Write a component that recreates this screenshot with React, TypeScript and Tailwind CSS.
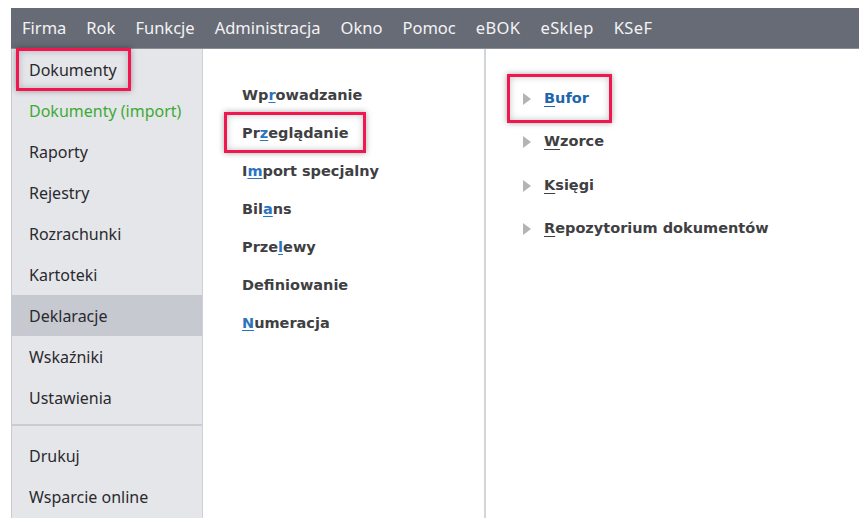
import React from 'react';

type Hotkey = { pre: string; key: string; post: string };

const menuBar = ['Firma', 'Rok', 'Funkcje', 'Administracja', 'Okno', 'Pomoc', 'eBOK', 'eSklep', 'KSeF'];

const modules = [
  'Dokumenty',
  'Dokumenty (import)',
  'Raporty',
  'Rejestry',
  'Rozrachunki',
  'Kartoteki',
  'Deklaracje',
  'Wskaźniki',
  'Ustawienia',
];

const actions: Hotkey[] = [
  { pre: 'Wp', key: 'r', post: 'owadzanie' },
  { pre: 'Pr', key: 'z', post: 'eglądanie' },
  { pre: 'I', key: 'm', post: 'port specjalny' },
  { pre: 'Bil', key: 'a', post: 'ns' },
  { pre: 'Prze', key: 'l', post: 'ewy' },
  { pre: 'Def', key: 'i', post: 'niowanie' },
  { pre: '', key: 'N', post: 'umeracja' },
];

const views: Hotkey[] = [
  { pre: '', key: 'B', post: 'ufor' },
  { pre: '', key: 'W', post: 'zorce' },
  { pre: '', key: 'K', post: 'sięgi' },
  { pre: '', key: 'R', post: 'epozytorium dokumentów' },
];

// Annotation frame drawn on top of the selected entries
const Marker: React.FC<{ className: string }> = ({ className }) => (
  <span
    className={`pointer-events-none absolute border-[3px] border-[#f0164f] shadow-[0_0_6px_rgba(0,0,0,0.35),inset_0_0_7px_rgba(0,0,0,0.22)] ${className}`}
  />
);

const Arrow = () => (
  <svg width="8" height="12" viewBox="0 0 8 12" className="shrink-0" aria-hidden="true">
    <path d="M0 0 L8 6 L0 12 Z" fill="#b4b4b4" />
  </svg>
);

export default function App() {
  return (
    <div className="w-[859px] h-[518px] overflow-hidden bg-white pl-[11px] pt-[8px] font-['Noto_Sans',sans-serif]">
      {/* Top menu */}
      <div className="flex h-[41px] items-center gap-[20px] border-b border-[#8a8e96] bg-[#676b75] pl-[11px] text-[16.5px] text-[#f3f3f5]">
        {menuBar.map(item => (
          <span key={item} className={item.startsWith('e') || item === 'KSeF' ? 'tracking-[0.4px]' : ''}>
            {item}
          </span>
        ))}
      </div>

      <div className="flex h-[470px]">
        {/* Modules */}
        <div className="flex w-[192px] shrink-0 flex-col border-l border-r border-l-[#c9cbd1] border-r-[#cdd0d7] bg-[#e5e6ea] text-[16px] text-[#2a2a2e]">
          {modules.map((name, i) => (
            <div
              key={name}
              className={`relative flex h-[41px] items-center pl-[17px] ${
                name === 'Deklaracje' ? 'bg-[#c6c9d0]' : ''
              } ${name === 'Dokumenty (import)' ? 'text-[#3daa35]' : ''}`}
            >
              {name}
              {i === 0 && <Marker className="left-[4px] top-[-1px] h-[43px] w-[115px]" />}
            </div>
          ))}
          <div className="mb-[9px] mt-[6px] border-t-2 border-[#c9ccd3]" />
          <div className="flex h-[41px] items-center pl-[17px]">Drukuj</div>
          <div className="flex h-[41px] items-center pl-[17px]">Wsparcie online</div>
        </div>

        {/* Actions */}
        <div className="flex w-[283px] shrink-0 flex-col border-r-2 border-[#d3d6d9] pl-[39px] pt-[28px] font-['DejaVu_Sans',sans-serif] text-[14.5px] font-bold text-[#404043]">
          {actions.map((a, i) => (
            <div key={a.post} className="relative flex h-[38px] items-center">
              <span>
                {a.pre && <span>{a.pre}</span>}
                <span className="text-[#2b74c2] underline decoration-[#2b74c2] underline-offset-[2px]">{a.key}</span>
                <span>{a.post}</span>
              </span>
              {i === 1 && <Marker className="left-[-18px] top-[-3px] h-[41px] w-[142px]" />}
            </div>
          ))}
        </div>

        {/* Views */}
        <div className="flex flex-1 flex-col pl-[37px] pt-[28px] font-['DejaVu_Sans',sans-serif] text-[14.5px] font-bold text-[#404043]">
          {views.map((v, i) => (
            <div key={v.post} className="relative flex h-[43.5px] items-center gap-[13px]">
              <Arrow />
              <span className={i === 0 ? 'text-[#1c66ad]' : ''}>
                <span className="underline underline-offset-[3px]">{v.key}</span>
                <span>{v.post}</span>
              </span>
              {i === 0 && <Marker className="left-[-16px] top-[-3px] h-[49px] w-[105px]" />}
            </div>
          ))}
        </div>
      </div>
    </div>
  );
}
